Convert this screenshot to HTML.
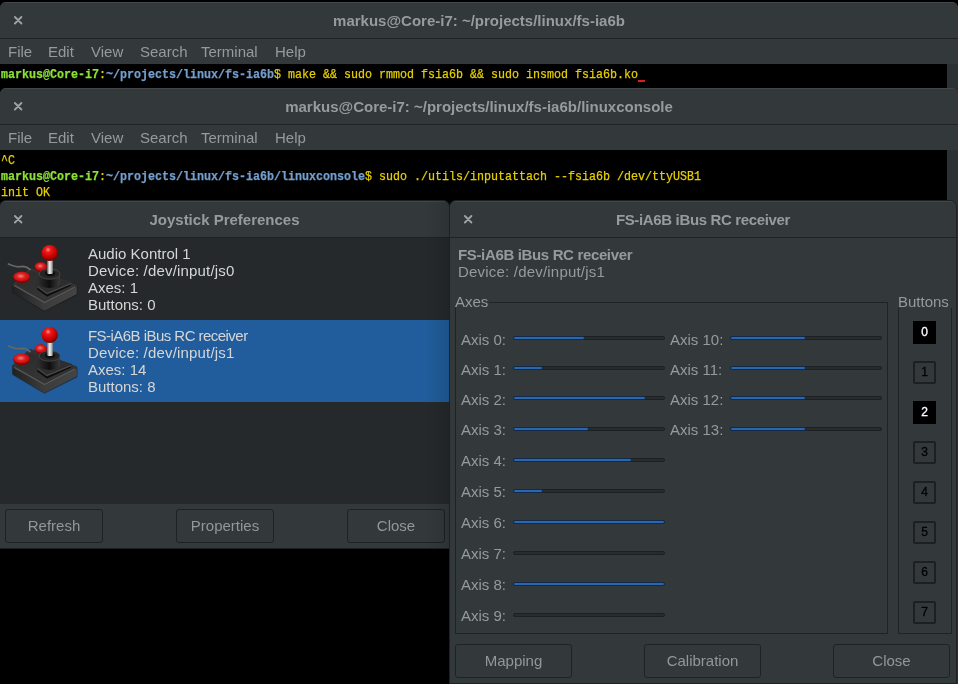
<!DOCTYPE html>
<html><head><meta charset="utf-8">
<style>
*{box-sizing:border-box;margin:0;padding:0}
html,body{width:958px;height:684px;overflow:hidden;background:#000}
body{position:relative;will-change:transform;font-family:"Liberation Sans",sans-serif;font-size:15px}
.abs{position:absolute}
.win{position:absolute;overflow:hidden}
.tbar{position:absolute;left:0;right:0;top:0;height:36px;background:#33393b;border-top:1px solid #41474a}
.ttl{position:absolute;left:0;right:0;top:10px;text-align:center;font-weight:700;color:#979b9b;line-height:17px;white-space:pre}
.xic{position:absolute;width:9px;height:9px}
.sep{position:absolute;left:0;right:0;height:1px;background:#1f2325}
.menu{position:absolute;left:0;right:0;height:25px;background:#33393b}
.mi{position:absolute;top:4px;color:#969a9a;line-height:17px;white-space:pre}
.term{position:absolute;left:0;background:#000}
.sb{position:absolute;background:#2c3133}
.tl{position:absolute;left:1px;white-space:pre;font-family:"Liberation Mono",monospace;font-size:13px;line-height:16px;transform-origin:0 0;transform:scaleX(0.8974);-webkit-text-stroke:0.25px currentColor}
.g{color:#8ae234;font-weight:700}.b{color:#729fcf;font-weight:700}.y{color:#e6cf00}
.lt{position:absolute;left:88px;color:#d6d6d6;line-height:17px;white-space:pre}
.btn{position:absolute;height:34px;border:1px solid #1e2224;border-radius:3px;background:#33393b;color:#929797;text-align:center;line-height:32px}
.fl{position:absolute;color:#969a9a;line-height:17px;white-space:pre}
.tr{position:absolute;height:4px;border-radius:2px;background:#282c2e;border:1px solid #1d2022}
.fi{position:absolute;left:-1px;top:-1px;height:4px;border-radius:2px;background:#2a67ae;border:1px solid #11294a}
.bb{position:absolute;left:913px;width:23px;height:23px;border:2px solid #1d2022;border-radius:2px;color:#000;-webkit-text-stroke:0.3px currentColor;font-family:"Liberation Sans",sans-serif;font-size:12px;text-align:center;line-height:19px}
.bb.on{background:#000;color:#fff;border-color:#000;border-radius:0}
</style></head><body>

<!-- Terminal window 1 -->
<div class="win" style="left:0;top:2px;width:958px;height:90px;border-radius:6px 6px 0 0;background:#33393b">
  <div class="tbar"></div>
  <svg class="xic" style="left:14px;top:14px" viewBox="0 0 9 9"><path d="M0.9 1L7.4 7.5M7.4 1L0.9 7.5" stroke="#9fa3a3" stroke-width="1.8" stroke-linecap="round"/></svg>
  <div class="ttl">markus@Core-i7: ~/projects/linux/fs-ia6b</div>
  <div class="sep" style="top:36px"></div>
  <div class="menu" style="top:37px">
    <span class="mi" style="left:8px">File</span><span class="mi" style="left:48px">Edit</span><span class="mi" style="left:91px">View</span><span class="mi" style="left:140px">Search</span><span class="mi" style="left:201px">Terminal</span><span class="mi" style="left:275px">Help</span>
  </div>
  <div class="term" style="top:62px;width:947px;height:30px">
    <div class="tl" style="top:3px"><span class="g">markus@Core-i7</span><span class="y">:</span><span class="b">~/projects/linux/fs-ia6b</span><span class="y">$ make &amp;&amp; sudo rmmod fsia6b &amp;&amp; sudo insmod fsia6b.ko</span></div>
    <div class="abs" style="left:638px;top:16px;width:7px;height:2px;background:#e01b1b"></div>
  </div>
  <div class="sb" style="left:947px;top:62px;width:11px;height:30px"></div>
</div>

<!-- Terminal window 2 -->
<div class="win" style="left:0;top:88px;width:958px;height:596px;border-radius:6px 6px 0 0;background:#33393b">
  <div class="tbar"></div>
  <svg class="xic" style="left:14px;top:14px" viewBox="0 0 9 9"><path d="M0.9 1L7.4 7.5M7.4 1L0.9 7.5" stroke="#9fa3a3" stroke-width="1.8" stroke-linecap="round"/></svg>
  <div class="ttl">markus@Core-i7: ~/projects/linux/fs-ia6b/linuxconsole</div>
  <div class="sep" style="top:36px"></div>
  <div class="menu" style="top:37px">
    <span class="mi" style="left:8px">File</span><span class="mi" style="left:48px">Edit</span><span class="mi" style="left:91px">View</span><span class="mi" style="left:140px">Search</span><span class="mi" style="left:201px">Terminal</span><span class="mi" style="left:275px">Help</span>
  </div>
  <div class="term" style="top:62px;width:947px;height:534px">
    <div class="tl" style="top:3px"><span class="y">^C</span></div>
    <div class="tl" style="top:19px"><span class="g">markus@Core-i7</span><span class="y">:</span><span class="b">~/projects/linux/fs-ia6b/linuxconsole</span><span class="y">$ sudo ./utils/inputattach --fsia6b /dev/ttyUSB1</span></div>
    <div class="tl y" style="top:35px">init OK</div>
  </div>
  <div class="sb" style="left:947px;top:62px;width:11px;height:534px"></div>
</div>

<!-- Joystick Preferences -->
<div class="abs" style="left:0;top:201px;width:449px;height:347px;border-radius:6px 6px 0 0;box-shadow:0 0 0 1px #1d2123"></div>
<div class="win" id="jp" style="left:0;top:201px;width:449px;height:347px;border-radius:6px 6px 0 0;background:#33393b">
  <div class="tbar"></div>
  <svg class="xic" style="left:14px;top:14px" viewBox="0 0 9 9"><path d="M0.9 1L7.4 7.5M7.4 1L0.9 7.5" stroke="#9fa3a3" stroke-width="1.8" stroke-linecap="round"/></svg>
  <div class="ttl">Joystick Preferences</div>
  <div class="abs" style="left:0;top:36px;width:449px;height:267px;background:#25292b">
    <div class="abs" style="left:0;top:83px;width:449px;height:82px;background:#215d9c"></div>
  </div>
  <div class="abs" style="left:0;top:303px;width:449px;height:44px;background:#33393b"></div>
  <div class="btn" style="left:5px;top:308px;width:98px">Refresh</div>
  <div class="btn" style="left:176px;top:308px;width:98px">Properties</div>
  <div class="btn" style="left:347px;top:308px;width:98px">Close</div>
  <div class="sep" style="top:36px"></div>
  <div class="abs" style="left:425px;top:0;width:24px;height:347px;background:linear-gradient(to right,rgba(0,0,0,0),rgba(0,0,0,0.12))"></div>
</div>
<svg width="0" height="0" style="position:absolute"><defs>
<radialGradient id="gball" cx="0.4" cy="0.3" r="0.75"><stop offset="0" stop-color="#ff8c8c"/><stop offset="0.22" stop-color="#ee1a1a"/><stop offset="0.65" stop-color="#c20000"/><stop offset="1" stop-color="#5a0000"/></radialGradient>
<radialGradient id="gbtn" cx="0.45" cy="0.45" r="0.6"><stop offset="0" stop-color="#e88484"/><stop offset="0.45" stop-color="#dd2222"/><stop offset="1" stop-color="#c00000"/></radialGradient>
<linearGradient id="gstick" x1="0" x2="1" y1="0" y2="0"><stop offset="0" stop-color="#777"/><stop offset="0.45" stop-color="#f2f2f2"/><stop offset="1" stop-color="#888"/></linearGradient>
<linearGradient id="gside" x1="0" x2="1" y1="0" y2="0"><stop offset="0" stop-color="#222"/><stop offset="0.5" stop-color="#3c3c3c"/><stop offset="1" stop-color="#444"/></linearGradient>
<linearGradient id="gtop" x1="0" x2="1" y1="0" y2="1"><stop offset="0" stop-color="#2a2a2a"/><stop offset="1" stop-color="#3a3a3a"/></linearGradient>
<linearGradient id="gcol" x1="0" x2="1" y1="0" y2="0"><stop offset="0" stop-color="#2a2a2a"/><stop offset="0.5" stop-color="#0e0e0e"/><stop offset="1" stop-color="#3a3a3a"/></linearGradient>
<symbol id="joy" viewBox="0 0 80 82">
<path d="M30.5 31 L75.5 48 L75.5 56 L44.5 71.5 L14 53.5 L14 46.5 Z" fill="#171717" stroke="#171717" stroke-width="4" stroke-linejoin="round" opacity="0.6"/>
<path d="M14 46.5 L44.5 63.5 L75.5 48 L75.5 55.5 L44.5 71.5 L14 53.5 Z" fill="url(#gside)" stroke="url(#gside)" stroke-width="2.5" stroke-linejoin="round"/>
<path d="M30.5 31 L75.5 48 L44.5 63.5 L14 46.5 Z" fill="url(#gtop)" stroke="#333" stroke-width="3" stroke-linejoin="round"/>
<path d="M14.5 47.5 L44.5 64.5 L75 49" fill="none" stroke="#5a5a5a" stroke-width="1.3" stroke-linejoin="round"/>
<path d="M41 40 L70 47 L47 57.5 L38 51 Z" fill="#0e0e0e" stroke="#0e0e0e" stroke-width="2" stroke-linejoin="round"/>
<path d="M40 35 L71 45 L47 55 L37 48 Z" fill="#2e2e2e" stroke="#2e2e2e" stroke-width="2.5" stroke-linejoin="round"/>
<path d="M37.5 48.5 L47 55.5 L71 45.5" fill="none" stroke="#4e4e4e" stroke-width="1" stroke-linejoin="round"/>
<path d="M8.5 26 C12 27.5 14.5 28.8 18.5 28.8 C22.5 28.4 25.5 27.6 30 31.5" fill="none" stroke="#666" stroke-width="1.8" stroke-linecap="round"/>
<ellipse cx="21.6" cy="39.6" rx="8.4" ry="5.3" fill="#900000"/>
<ellipse cx="21.6" cy="38.6" rx="8.2" ry="4.8" fill="url(#gbtn)"/>
<ellipse cx="40.8" cy="29.2" rx="6.2" ry="4.6" fill="#900000"/>
<ellipse cx="40.8" cy="28.4" rx="6" ry="4.2" fill="url(#gbtn)"/>
<path d="M39 36 L39 45 A10.5 5 0 0 0 60 45 L60 36 Z" fill="url(#gcol)"/>
<ellipse cx="49.5" cy="36" rx="10.5" ry="5.2" fill="#262626" stroke="#474747" stroke-width="0.9"/>
<ellipse cx="50" cy="35.6" rx="5.2" ry="2.8" fill="#0f0f0f"/>
<rect x="47.2" y="21.5" width="5.6" height="14.5" rx="1.2" fill="url(#gstick)"/>
<circle cx="49.7" cy="15" r="8.1" fill="url(#gball)"/>
</symbol></defs></svg>
<svg class="abs" style="left:0;top:238px" width="80" height="82" viewBox="0 0 80 82"><use href="#joy"/></svg>
<svg class="abs" style="left:0;top:320px" width="80" height="82" viewBox="0 0 80 82"><use href="#joy"/></svg>
<div class="lt" style="top:245px">Audio Kontrol 1</div>
<div class="lt" style="top:262px;letter-spacing:0.18px">Device: /dev/input/js0</div>
<div class="lt" style="top:279px">Axes: 1</div>
<div class="lt" style="top:296px">Buttons: 0</div>
<div class="lt" style="top:327px;letter-spacing:-0.54px">FS-iA6B iBus RC receiver</div>
<div class="lt" style="top:344px;letter-spacing:0.18px">Device: /dev/input/js1</div>
<div class="lt" style="top:361px">Axes: 14</div>
<div class="lt" style="top:378px">Buttons: 8</div>

<!-- FS window -->
<div class="abs" style="left:450px;top:201px;width:506px;height:482px;border-radius:6px 6px 0 0;box-shadow:0 0 0 1px #1d2123"></div>
<div class="win" style="left:450px;top:201px;width:506px;height:482px;border-radius:6px 6px 0 0;background:#33393b">
  <div class="tbar"></div>
  <svg class="xic" style="left:14px;top:14px" viewBox="0 0 9 9"><path d="M0.9 1L7.4 7.5M7.4 1L0.9 7.5" stroke="#9fa3a3" stroke-width="1.8" stroke-linecap="round"/></svg>
  <div class="ttl" style="letter-spacing:-0.35px">FS-iA6B iBus RC receiver</div>
  <div class="sep" style="top:36px"></div>
</div>

<div class="fl" style="left:458px;top:246px;font-weight:700;letter-spacing:-0.35px">FS-iA6B iBus RC receiver</div>
<div class="fl" style="left:458px;top:263px;letter-spacing:0.2px">Device: /dev/input/js1</div>

<!-- Axes frame -->
<div class="abs" style="left:455px;top:302px;width:433px;height:332px;border:1px solid #1f2325"></div>
<div class="fl" style="left:455px;top:293px;height:14px;background:#33393b;padding-right:1px">Axes</div>
<!-- Buttons frame -->
<div class="abs" style="left:898px;top:307px;width:54px;height:327px;border:1px solid #1f2325"></div>
<div class="fl" style="left:898px;top:293px;width:55px;height:15px;background:#33393b">Buttons</div>

<div class="fl" style="left:461px;top:331px">Axis 0:</div>
<div class="tr" style="left:513px;top:336px;width:152px"><div class="fi" style="width:72px"></div></div>
<div class="fl" style="left:461px;top:361px">Axis 1:</div>
<div class="tr" style="left:513px;top:366px;width:152px"><div class="fi" style="width:30px"></div></div>
<div class="fl" style="left:461px;top:391px">Axis 2:</div>
<div class="tr" style="left:513px;top:396px;width:152px"><div class="fi" style="width:133px"></div></div>
<div class="fl" style="left:461px;top:421px">Axis 3:</div>
<div class="tr" style="left:513px;top:427px;width:152px"><div class="fi" style="width:76px"></div></div>
<div class="fl" style="left:461px;top:452px">Axis 4:</div>
<div class="tr" style="left:513px;top:458px;width:152px"><div class="fi" style="width:119px"></div></div>
<div class="fl" style="left:461px;top:483px">Axis 5:</div>
<div class="tr" style="left:513px;top:489px;width:152px"><div class="fi" style="width:30px"></div></div>
<div class="fl" style="left:461px;top:514px">Axis 6:</div>
<div class="tr" style="left:513px;top:520px;width:152px"><div class="fi" style="width:152px"></div></div>
<div class="fl" style="left:461px;top:545px">Axis 7:</div>
<div class="tr" style="left:513px;top:551px;width:152px"></div>
<div class="fl" style="left:461px;top:576px">Axis 8:</div>
<div class="tr" style="left:513px;top:582px;width:152px"><div class="fi" style="width:152px"></div></div>
<div class="fl" style="left:461px;top:607px">Axis 9:</div>
<div class="tr" style="left:513px;top:613px;width:152px"></div>
<div class="fl" style="left:670px;top:331px">Axis 10:</div>
<div class="tr" style="left:730px;top:336px;width:152px"><div class="fi" style="width:76px"></div></div>
<div class="fl" style="left:670px;top:361px">Axis 11:</div>
<div class="tr" style="left:730px;top:366px;width:152px"><div class="fi" style="width:76px"></div></div>
<div class="fl" style="left:670px;top:391px">Axis 12:</div>
<div class="tr" style="left:730px;top:396px;width:152px"><div class="fi" style="width:76px"></div></div>
<div class="fl" style="left:670px;top:421px">Axis 13:</div>
<div class="tr" style="left:730px;top:427px;width:152px"><div class="fi" style="width:76px"></div></div>
<div class="bb on" style="top:321px">0</div>
<div class="bb" style="top:361px">1</div>
<div class="bb on" style="top:401px">2</div>
<div class="bb" style="top:441px">3</div>
<div class="bb" style="top:481px">4</div>
<div class="bb" style="top:521px">5</div>
<div class="bb" style="top:561px">6</div>
<div class="bb" style="top:601px">7</div>

<!-- FS action buttons -->
<div class="btn" style="left:455px;top:644px;width:117px;height:34px">Mapping</div>
<div class="btn" style="left:644px;top:644px;width:117px;height:34px">Calibration</div>
<div class="btn" style="left:833px;top:644px;width:117px;height:34px">Close</div>

</body></html>
